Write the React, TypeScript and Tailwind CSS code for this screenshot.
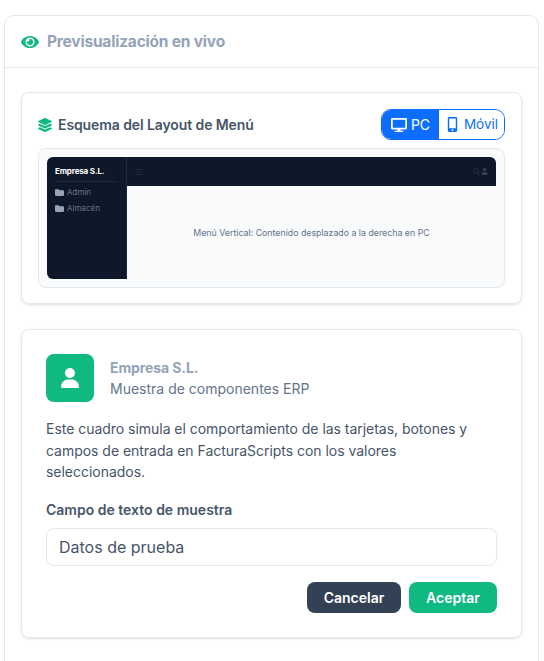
import React from 'react';
import { FaEye, FaLayerGroup, FaDesktop, FaMobileAlt, FaUser, FaFolder, FaBars, FaSearch } from 'react-icons/fa';

const font = "font-['Inter',_'Noto_Sans',_sans-serif]";

const SidebarItem = ({ label }: { label: string }) => (
  <div className="flex items-center gap-[3px] h-[16px] text-[8px] text-[#64748b]">
    <FaFolder className="text-[9px] text-[#94a3b8]" />
    <span>{label}</span>
  </div>
);

const LayoutPreview = () => (
  <div className="flex h-[122px] rounded-[6px] overflow-hidden bg-[#f8fafc]">
    <aside className="w-[80px] shrink-0 bg-[#0f172a] border-r border-[#1e293b] px-[8px] pt-[9px]">
      <div className="text-[8px] leading-[10px] font-bold text-white tracking-[-0.15px] pb-[5px] border-b border-[#1e293b] mb-[2px]">
        Empresa S.L.
      </div>
      <SidebarItem label="Admin" />
      <SidebarItem label="Almacén" />
    </aside>
    <div className="flex-1 flex flex-col">
      <div className="h-[29px] bg-[#0f172a] flex items-center justify-between px-[8px]">
        <FaBars className="text-[8px] text-[#1e293b]" />
        <div className="flex items-center gap-[1px] text-[#1e293b]">
          <FaSearch className="text-[7px]" />
          <FaUser className="text-[7px] text-[#334155]" />
        </div>
      </div>
      <div className="flex-1 flex items-center justify-center text-[8.8px] text-[#64748b]">
        Menú Vertical: Contenido desplazado a la derecha en PC
      </div>
    </div>
  </div>
);

export default function App() {
  return (
    <div className={`${font} h-[661px] overflow-hidden bg-white pt-[15px] pl-[4px] pr-[5px]`}>
      <div className="border border-[#e2e8f0] rounded-[10px] bg-white h-[700px]">
        <div className="h-[52px] border-b border-[#e2e8f0] flex items-center gap-[8px] px-[16px]">
          <FaEye className="text-[#10b981] text-[18px]" />
          <h2 className="text-[15.5px] font-bold text-[#94a3b8] tracking-[-0.2px]">Previsualización en vivo</h2>
        </div>

        <div className="px-[16px] pt-[24px] flex flex-col gap-[25px]">
          <section className="border border-[#e2e8f0] rounded-[8px] shadow-sm px-[16px] pt-[16px] h-[212px]">
            <div className="flex items-center justify-between h-[31px] mb-[8px]">
              <div className="flex items-center gap-[6px]">
                <FaLayerGroup className="text-[#10b981] text-[14px]" />
                <span className="text-[14px] font-semibold text-[#475569] tracking-[-0.1px]">Esquema del Layout de Menú</span>
              </div>
              <div className="flex h-[31px] rounded-[10px] border border-[#0d6efd] overflow-hidden text-[14px]">
                <button className="flex items-center gap-[4px] w-[57px] justify-center bg-[#0d6efd] text-white">
                  <FaDesktop className="text-[16px]" />
                  PC
                </button>
                <button className="flex items-center gap-[4px] w-[65px] justify-center bg-white text-[#0d6efd] text-[13.5px]">
                  <FaMobileAlt className="text-[15px]" />
                  Móvil
                </button>
              </div>
            </div>
            <div className="border border-[#e2e8f0] rounded-[8px] bg-[#f8fafc] p-[8px]">
              <LayoutPreview />
            </div>
          </section>

          <section className="border border-[#e2e8f0] rounded-[8px] shadow-sm px-[24px] pt-[24px] h-[309px]">
            <div className="flex items-center gap-[16px] mb-[16px]">
              <div className="w-[48px] h-[48px] rounded-[8px] bg-[#10b981] flex items-center justify-center">
                <svg width="18" height="20" viewBox="0 0 18 20" fill="white">
                  <circle cx="9" cy="5" r="5" />
                  <path d="M0 19C0 14 4 11.5 7 11.5h4c3 0 7 2.5 7 7.5a1 1 0 0 1-1 1H1a1 1 0 0 1-1-1z" />
                </svg>
              </div>
              <div>
                <div className="text-[14px] leading-[20px] font-bold text-[#94a3b8] tracking-[-0.1px]">Empresa S.L.</div>
                <div className="text-[14px] leading-[21px] text-[#64748b]">Muestra de componentes ERP</div>
              </div>
            </div>
            <p className="text-[14px] leading-[21.5px] text-[#475569] tracking-[-0.03px] mb-[16px]">
              Este cuadro simula el comportamiento de las tarjetas, botones y campos de entrada en FacturaScripts con los valores seleccionados.
            </p>
            <label className="block text-[14px] leading-[21px] font-semibold text-[#475569] mb-[8px]">Campo de texto de muestra</label>
            <input
              readOnly
              value="Datos de prueba"
              className="block w-full h-[38px] rounded-[8px] border border-[#e2e8f0] px-[12px] text-[16px] text-[#475569] outline-none"
            />
            <div className="flex justify-end gap-[8px] mt-[16px]">
              <button className="h-[31px] w-[94px] rounded-[8px] bg-[#334155] text-white text-[14px] font-semibold">Cancelar</button>
              <button className="h-[31px] w-[88px] rounded-[8px] bg-[#10b981] text-white text-[14px] font-semibold">Aceptar</button>
            </div>
          </section>
        </div>
      </div>
    </div>
  );
}
